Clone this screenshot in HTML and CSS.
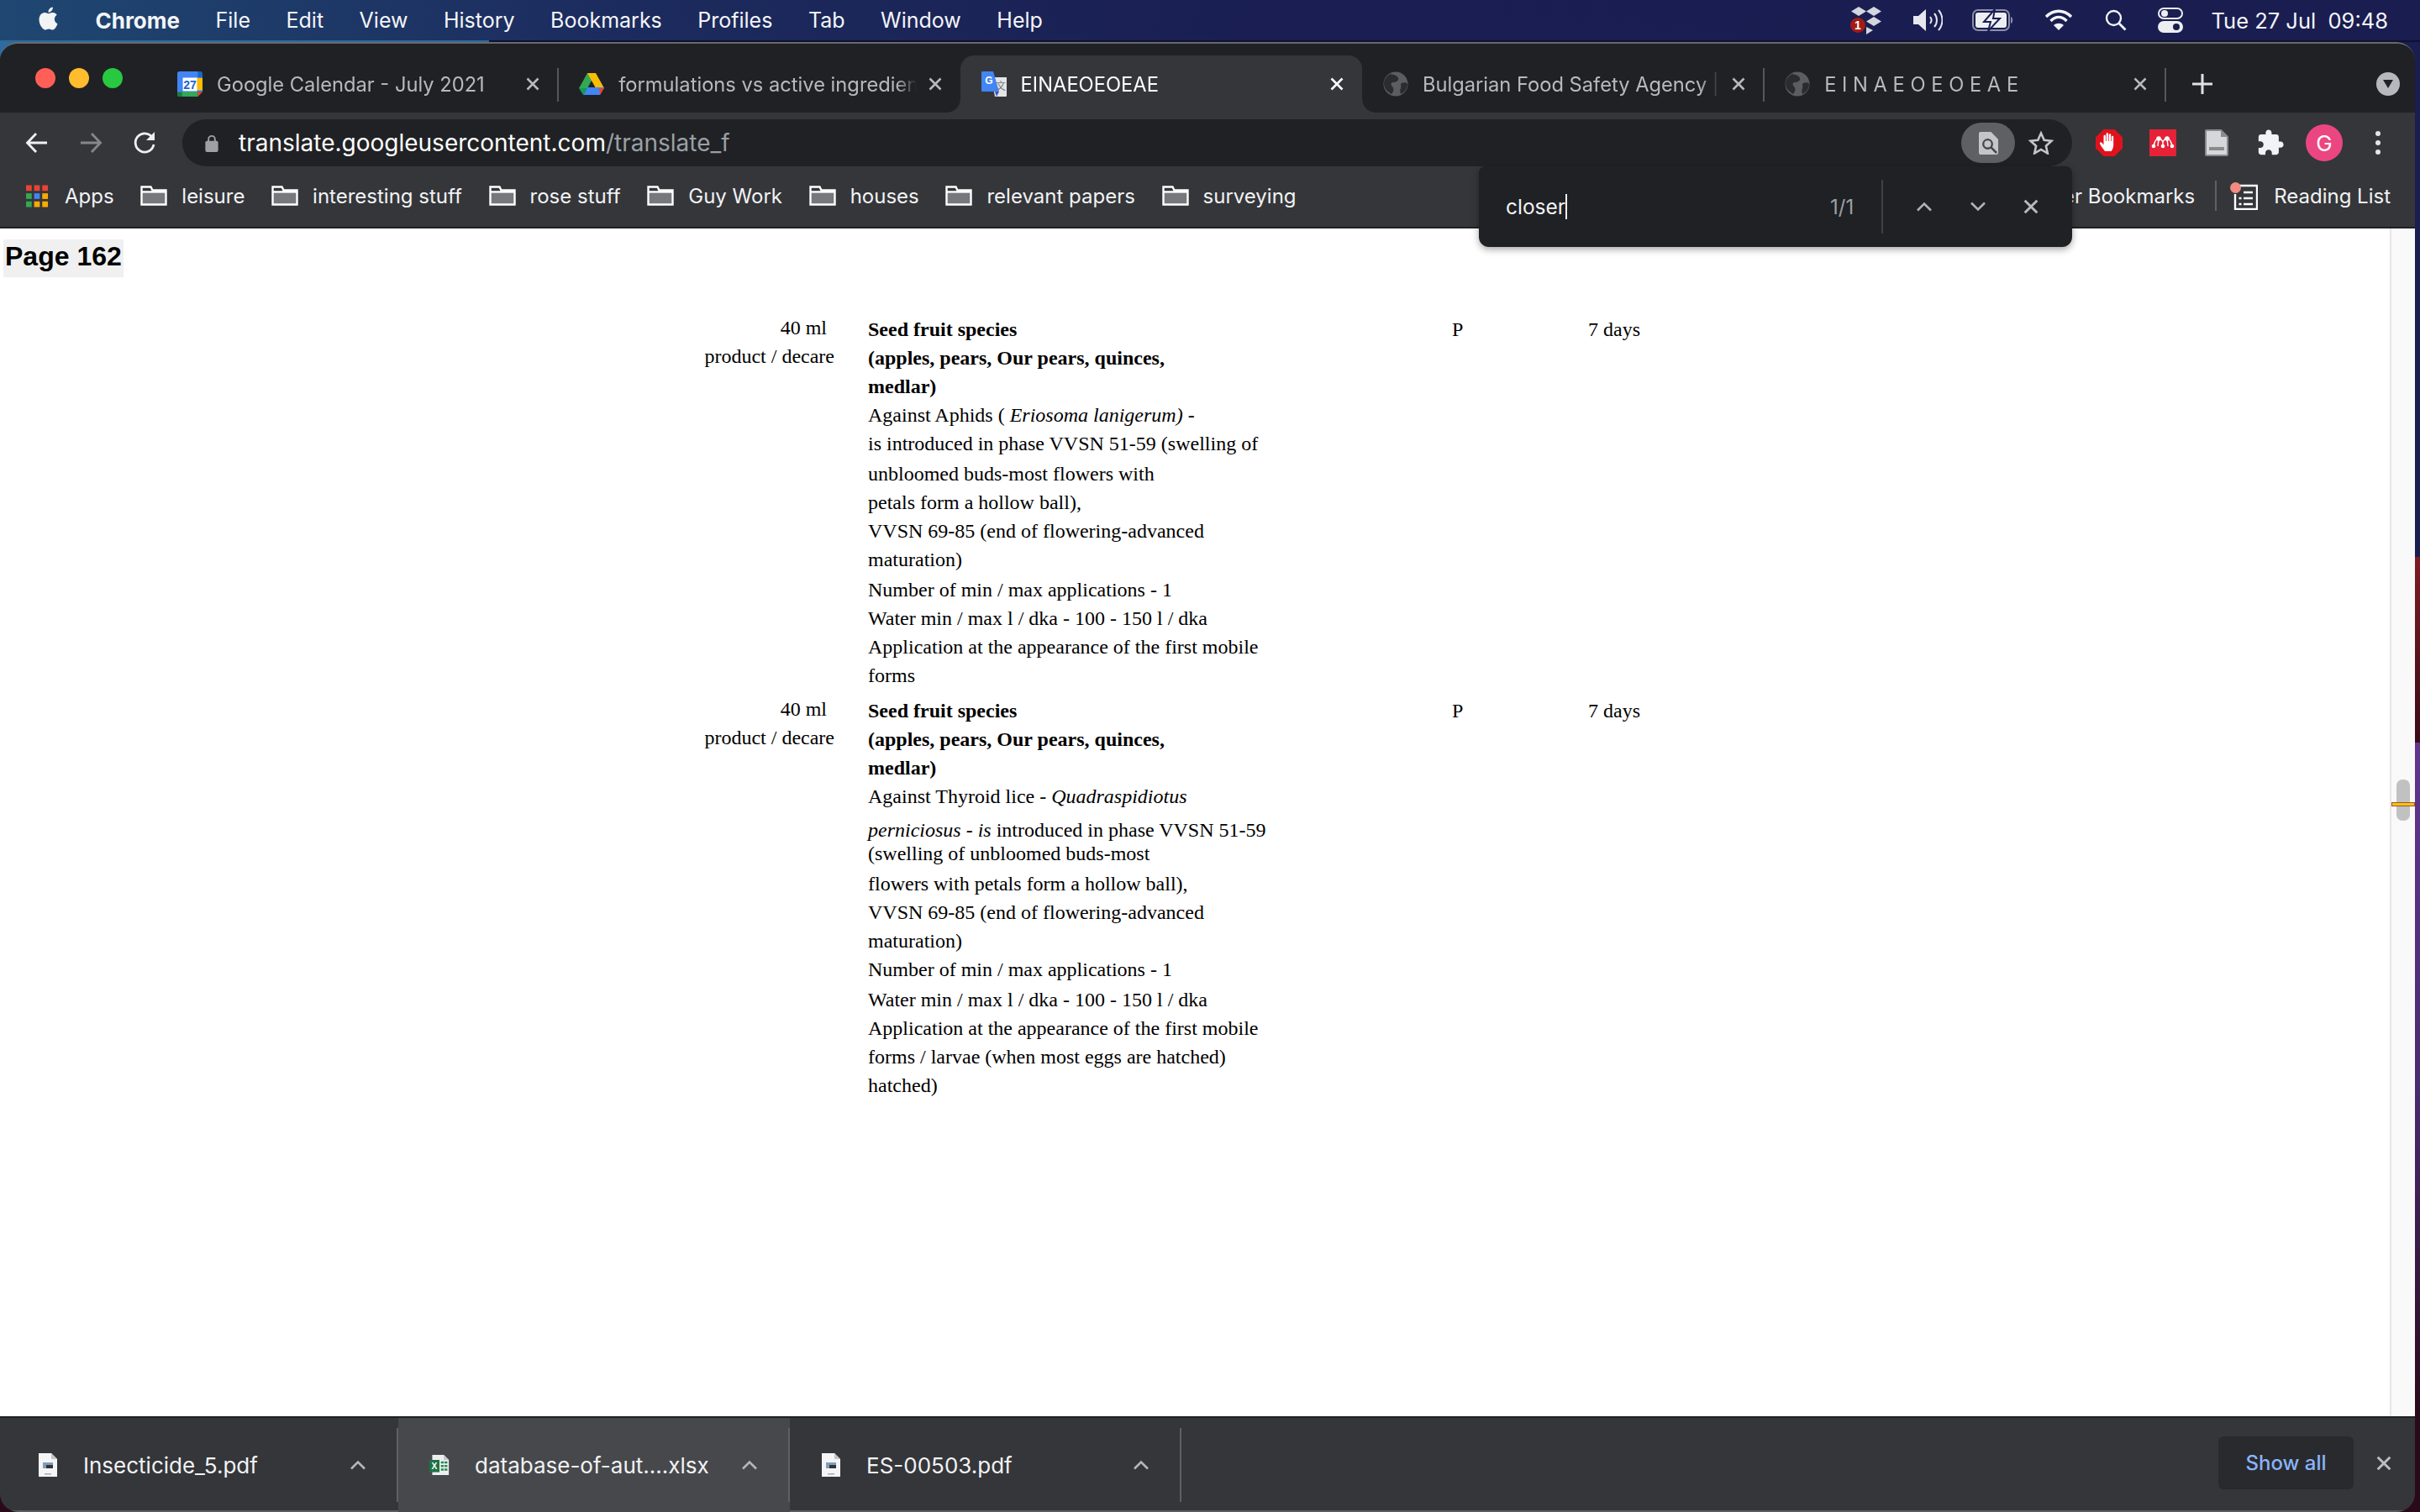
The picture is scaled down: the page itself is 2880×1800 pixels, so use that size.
FILE: index.html
```html
<!DOCTYPE html>
<html lang="en">
<head>
<meta charset="utf-8">
<title>Chrome</title>
<link rel="stylesheet" href="styles.css">
</head>
<body>
<svg class="defs" width="0" height="0" aria-hidden="true">
  <symbol id="folder" viewBox="0 0 32 24">
    <path d="M2 9h28v13H2z" fill="#77787b"/>
    <path d="M1.5 22.5V1.5h11l2 4h16v17zM1.5 7.5h29" fill="none" stroke="#fff" stroke-width="2.4"/>
  </symbol>
  <symbol id="x" viewBox="0 0 16 16">
    <path d="M1.5 1.5l13 13M14.500 1.500l-13 13" fill="none" stroke="currentColor" stroke-width="2.6"/>
  </symbol>
  <symbol id="up" viewBox="0 0 20 12">
    <path d="M2 10.500l8-8 8 8" fill="none" stroke="currentColor" stroke-width="2.6"/>
  </symbol>
  <symbol id="globe" viewBox="0 0 30 30">
    <circle cx="15" cy="15" r="14.500" fill="#5b5d61"/>
    <path d="M9 3c4 1 8 2 9 5s-3 5-6 5-3 3-1 5 2 6-1 9C5 24 1 20 1 15S4 5 9 3zM22 14c3-1 6-1 7 1 0 5-3 10-8 12-1-3-1-5 0-7s-1-5 1-6z" fill="#2b2c30"/>
  </symbol>
  <symbol id="pdf" viewBox="0 0 24 30">
    <path d="M1 1h15l7 7v21H1z" fill="#f4f5f6"/>
    <path d="M16 1v7h7z" fill="#c3c5c8"/>
    <rect x="6" y="12" width="12" height="7" fill="#7f9dbb"/>
    <rect x="10" y="15" width="8" height="4" fill="#333"/>
    <rect x="8" y="25" width="8" height="1.500" fill="#aaa"/>
  </symbol>
</svg>

<header class="menubar">
  <nav class="menu">
    <svg class="apple" viewBox="0 0 24 24"><path fill="#f2f3f5" d="M12.152 6.896c-.948 0-2.415-1.078-3.96-1.04-2.04.027-3.91 1.183-4.961 3.014-2.117 3.675-.546 9.103 1.519 12.09 1.013 1.454 2.208 3.09 3.792 3.039 1.52-.065 2.09-.987 3.935-.987 1.831 0 2.35.987 3.96.948 1.637-.026 2.676-1.48 3.676-2.948 1.156-1.688 1.636-3.325 1.662-3.415-.039-.013-3.182-1.221-3.22-4.857-.026-3.04 2.48-4.494 2.597-4.559-1.429-2.09-3.623-2.324-4.39-2.376-2-.156-3.675 1.09-4.61 1.09zM15.53 3.83c.843-1.012 1.4-2.427 1.245-3.83-1.207.052-2.662.805-3.532 1.818-.78.896-1.454 2.338-1.273 3.714 1.338.104 2.715-.688 3.559-1.701"/></svg>
    <b class="menu-app">Chrome</b>
    <span>File</span><span>Edit</span><span>View</span><span>History</span><span>Bookmarks</span><span>Profiles</span><span>Tab</span><span>Window</span><span>Help</span>
  </nav>
  <div class="status">
    <svg class="st-dropbox" viewBox="0 0 38 34">
      <path d="M10 1l9 5.500-9 5.500-9-5.500zM28 1l9 5.500-9 5.500-9-5.500zM28 13l9 5.500-9 5.500-9-5.500zM19 25l8 4-8 5z" fill="#d3d5df"/>
      <circle cx="9" cy="23" r="9" fill="#a41b14"/>
      <text x="9" y="28" class="st-badge">1</text>
    </svg>
    <svg class="st-volume" viewBox="0 0 36 28">
      <path d="M1 9h6l9-8v26l-9-8H1z" fill="#e6e7ee"/>
      <path d="M21 10c2 2.500 2 5.500 0 8M26 6c4 4.500 4 11.500 0 16M31 2c6 7 6 17 0 24" fill="none" stroke="#e6e7ee" stroke-width="2"/>
    </svg>
    <svg class="st-battery" viewBox="0 0 50 26">
      <rect x="1" y="1" width="43" height="24" rx="6" fill="none" stroke="#8c8fa8" stroke-width="2"/>
      <rect x="4" y="4" width="37" height="18" rx="3" fill="#eceef2"/>
      <path d="M46 9c3 1 3 7 0 8z" fill="#8c8fa8"/>
      <path d="M27 0L14 15h8l-3 11 14-15h-8z" fill="#eceef2" stroke="#1a1d50" stroke-width="2"/>
    </svg>
    <svg class="st-wifi" viewBox="0 0 34 26">
      <path d="M2 9c9-9 21-9 30 0M7.500 14c6-6 13-6 19 0" fill="none" stroke="#f2f3f7" stroke-width="3.400"/>
      <path d="M17 25l-6-6c3.500-3 8.500-3 12 0z" fill="#f2f3f7"/>
    </svg>
    <svg class="st-search" viewBox="0 0 26 26">
      <circle cx="10.500" cy="10.500" r="8.500" fill="none" stroke="#f2f3f7" stroke-width="2.400"/>
      <path d="M16.500 16.500l8 8" stroke="#f2f3f7" stroke-width="2.800"/>
    </svg>
    <svg class="st-control" viewBox="0 0 30 30">
      <rect x="1" y="1" width="28" height="12" rx="6" fill="none" stroke="#eceef2" stroke-width="2"/>
      <circle cx="8" cy="7" r="4" fill="#eceef2"/>
      <rect x="0" y="16" width="30" height="14" rx="7" fill="#eceef2"/>
      <circle cx="22" cy="23" r="4" fill="#1a1d50"/>
    </svg>
    <span class="clock">Tue 27 Jul  09:48</span>
  </div>
</header>

<main class="window">
  <div class="tabstrip">
    <div class="lights"><i class="light red"></i><i class="light amber"></i><i class="light green"></i></div>
    <div class="tab sep">
      <svg class="fav" viewBox="0 0 32 32">
        <path d="M3 0h23l6 6v20H26v6H3a3 3 0 0 1-3-3V3a3 3 0 0 1 3-3z" fill="#4285f4"/>
        <rect x="24" y="8" width="8" height="16" fill="#fbbc04"/>
        <rect x="6" y="26" width="20" height="6" fill="#34a853"/>
        <path d="M0 26h6v6H3a3 3 0 0 1-3-3z" fill="#188038"/>
        <path d="M26 0h3a3 3 0 0 1 3 3v5h-6z" fill="#1967d2"/>
        <path d="M26 26h6l-6 6z" fill="#ea4335"/>
        <rect x="7" y="8" width="18" height="17" fill="#fff"/>
        <text x="16" y="22" class="fav-cal">27</text>
      </svg>
      <span class="title">Google Calendar - July 2021</span>
      <svg class="close"><use href="#x"/></svg>
    </div>
    <div class="tab">
      <svg class="fav" viewBox="0 0 30 28">
        <path d="M10 0h10L10 18H0z" fill="#34a853" transform="translate(0 1)"/>
        <path d="M10 0h10l10 18H20z" fill="#fbbc04" transform="translate(0 1)"/>
        <path d="M5 27l5-9h20l-5 9z" fill="#4285f4"/>
        <path d="M0 19h10l-5 8z" fill="#0f9d58"/>
        <path d="M25 27l5-8h-6z" fill="#ea4335"/>
      </svg>
      <span class="title">formulations vs active ingredients</span>
      <svg class="close"><use href="#x"/></svg>
    </div>
    <div class="tab active">
      <svg class="fav" viewBox="0 0 30 30">
        <path d="M12 7h18v22a1 1 0 0 1-1 1H16z" fill="#e4e5e7"/>
        <path d="M1 0h13l7 24H1a1 1 0 0 1-1-1V1a1 1 0 0 1 1-1z" fill="#4285f4"/>
        <path d="M16 24h5l-3 6z" fill="#3a52c0"/>
        <text x="9" y="15" class="fav-g">G</text>
        <text x="23" y="22" class="fav-t">文</text>
      </svg>
      <span class="title">EINAEOEOEAE</span>
      <svg class="close"><use href="#x"/></svg>
    </div>
    <div class="tab sep">
      <svg class="fav"><use href="#globe"/></svg>
      <span class="title">Bulgarian Food Safety Agency |</span>
      <svg class="close"><use href="#x"/></svg>
    </div>
    <div class="tab sep">
      <svg class="fav"><use href="#globe"/></svg>
      <span class="title">E I N A E O E O E A E</span>
      <svg class="close"><use href="#x"/></svg>
    </div>
    <svg class="plus" viewBox="0 0 24 24"><path d="M12 0v24M0 12h24" stroke="#dfe1e4" stroke-width="3"/></svg>
    <div class="tab-search"><svg viewBox="0 0 14 12"><path d="M1 1h12L7 11z" fill="#202124"/></svg></div>
  </div>

  <div class="toolbar">
    <div class="navrow">
      <button class="btn"><svg class="ic" viewBox="0 0 28 28"><path d="M26 14H3M13 3L2.500 14 13 25" fill="none" stroke="#eef0f2" stroke-width="2.800"/></svg></button>
      <button class="btn"><svg class="ic" viewBox="0 0 28 28"><path d="M2 14h23M15 3l10.500 11L15 25" fill="none" stroke="#85878b" stroke-width="2.800"/></svg></button>
      <button class="btn"><svg class="ic" viewBox="0 0 28 28"><path d="M24 9A11 11 0 1 0 25 16" fill="none" stroke="#eef0f2" stroke-width="2.800"/><path d="M26 1v10H16z" fill="#eef0f2"/></svg></button>
      <div class="omnibox">
        <svg class="lock" viewBox="0 0 16 22"><path d="M4 9V6a4 4 0 0 1 8 0v3" fill="none" stroke="#9da0a5" stroke-width="2"/><rect y="8" width="16" height="14" rx="2" fill="#9da0a5"/></svg>
        <span class="url">translate.googleusercontent.com<span class="url-path">/translate_f</span></span>
        <div class="pill"><svg class="pill-ic" viewBox="0 0 24 28"><path d="M2 0h13l9 9v17a2 2 0 0 1-2 2H2a2 2 0 0 1-2-2V2a2 2 0 0 1 2-2z" fill="#c4c5c7"/><circle cx="11" cy="15" r="5.500" fill="none" stroke="#45464a" stroke-width="2.400"/><path d="M15 19l7 7" stroke="#45464a" stroke-width="2.600"/></svg></div>
        <svg class="star" viewBox="0 0 30 28"><path d="M15 2.500l3.700 8.200 8.800 1-6.600 6 1.900 8.800L15 21.900l-7.800 4.600 1.900-8.800-6.600-6 8.800-1z" fill="none" stroke="#c4c6c9" stroke-width="2.600"/></svg>
      </div>
      <button class="btn"><svg class="ext" viewBox="0 0 32 32"><path d="M9.500 0h13L32 9.500v13L22.500 32h-13L0 22.500v-13z" fill="#e0131c"/><path d="M11 26c-2-3-5-6-6-9-.5-1.500 1.500-2.500 2.500-1l2 2.500V8c0-1.800 2.400-1.800 2.400 0v6h.7V5.500c0-1.800 2.500-1.800 2.500 0V14h.7V6.500c0-1.800 2.400-1.800 2.400 0V14h.7V9c0-1.800 2.300-1.800 2.300 0v10c0 3-1.500 5-2.500 7z" fill="#fff"/></svg></button>
      <button class="btn"><svg class="ext" viewBox="0 0 32 32"><rect width="32" height="32" fill="#e52238"/><path d="M5 20c1-5 3-9 6-9 2 0 4 2 5 4 1-2 3-4 5-4 3 0 5 4 6 9M16 15v5M11 11l-1 9M21 11l1 9" fill="none" stroke="#fff" stroke-width="1.500"/><circle cx="5" cy="20" r="2.300" fill="#fff"/><circle cx="16" cy="20" r="2.300" fill="#fff"/><circle cx="27" cy="20" r="2.300" fill="#fff"/><circle cx="11" cy="11" r="2.800" fill="#fff"/><circle cx="21" cy="11" r="2.800" fill="#fff"/></svg></button>
      <button class="btn"><svg class="ext-doc" viewBox="0 0 28 32"><path d="M2 1h17l8 8v21a1 1 0 0 1-1 1H2a1 1 0 0 1-1-1V2a1 1 0 0 1 1-1z" fill="#d6d7d8" stroke="#8a8b8d" stroke-width="2"/><path d="M19 1v8h8z" fill="#8a8b8d"/><rect x="5" y="21" width="18" height="4" fill="#8a8b8d"/></svg></button>
      <button class="btn"><svg class="ext-puzzle" viewBox="0 0 24 24"><path fill="#f1f3f4" d="M20.500 11H19V7c0-1.100-.9-2-2-2h-4V3.500C13 2.120 11.880 1 10.500 1S8 2.120 8 3.500V5H4c-1.100 0-1.990.9-1.990 2v3.800H3.500c1.490 0 2.700 1.210 2.700 2.700s-1.210 2.700-2.700 2.700H2V20c0 1.100.9 2 2 2h3.800v-1.500c0-1.490 1.210-2.700 2.700-2.700 1.490 0 2.700 1.210 2.700 2.700V22H17c1.100 0 2-.9 2-2v-4h1.500c1.380 0 2.500-1.120 2.500-2.500S21.880 11 20.500 11z"/></svg></button>
      <button class="btn"><span class="avatar">G</span></button>
      <button class="btn"><span class="kebab"><i></i><i></i><i></i></span></button>
    </div>

    <div class="bookmarks">
      <div class="bm">
        <svg class="apps" viewBox="0 0 27 27">
          <rect width="7" height="7" fill="#ea4335"/><rect x="10" width="7" height="7" fill="#ea4335"/><rect x="20" width="7" height="7" fill="#ea4335"/>
          <rect y="10" width="7" height="7" fill="#34a853"/><rect x="10" y="10" width="7" height="7" fill="#4285f4"/><rect x="20" y="10" width="7" height="7" fill="#f9ab00"/>
          <rect y="20" width="7" height="7" fill="#34a853"/><rect x="10" y="20" width="7" height="7" fill="#f9ab00"/><rect x="20" y="20" width="7" height="7" fill="#f9ab00"/>
        </svg>
        <span>Apps</span>
      </div>
      <div class="bm"><svg class="folder"><use href="#folder"/></svg><span>leisure</span></div>
      <div class="bm"><svg class="folder"><use href="#folder"/></svg><span>interesting stuff</span></div>
      <div class="bm"><svg class="folder"><use href="#folder"/></svg><span>rose stuff</span></div>
      <div class="bm"><svg class="folder"><use href="#folder"/></svg><span>Guy Work</span></div>
      <div class="bm"><svg class="folder"><use href="#folder"/></svg><span>houses</span></div>
      <div class="bm"><svg class="folder"><use href="#folder"/></svg><span>relevant papers</span></div>
      <div class="bm"><svg class="folder"><use href="#folder"/></svg><span>surveying</span></div>
      <div class="bm-right">
        <span>Other Bookmarks</span>
        <i class="bm-sep"></i>
        <span class="reading">
          <svg class="reading-ic" viewBox="0 0 33 33">
            <path d="M9 4h23v28H6V14" fill="none" stroke="#fff" stroke-width="2.400"/>
            <path d="M16 12h11M16 19h11M16 26h11M10.500 19h3M10.500 26h3" stroke="#fff" stroke-width="2.400"/>
            <circle cx="6.500" cy="6.500" r="6.500" fill="#f28b82"/>
          </svg>
          Reading List
        </span>
      </div>
    </div>
    <div class="findbar">
      <span class="find-input">closer<i class="caret"></i></span>
      <span class="find-count">1/1</span>
      <i class="find-sep"></i>
      <svg class="find-btn"><use href="#up"/></svg>
      <svg class="find-btn flip"><use href="#up"/></svg>
      <svg class="find-x"><use href="#x"/></svg>
    </div>
  </div>

  <div class="content">
    <section class="page">
      <div class="page-label">Page 162</div>
      <div class="row">
        <div class="c-dose"><div class="ln offset">40 ml</div><div class="ln">product / decare</div></div>
        <div class="c-text">
          <div class="ln"><b>Seed fruit species</b></div>
          <div class="ln"><b>(apples, pears, Our pears, quinces,</b></div>
          <div class="ln"><b>medlar)</b></div>
          <div class="ln">Against Aphids ( <em>Eriosoma lanigerum)</em> -</div>
          <div class="ln tall">is introduced in phase VVSN 51-59 (swelling of</div>
          <div class="ln">unbloomed buds-most flowers with</div>
          <div class="ln">petals form a hollow ball),</div>
          <div class="ln">VVSN 69-85 (end of flowering-advanced</div>
          <div class="ln tall">maturation)</div>
          <div class="ln">Number of min / max applications - 1</div>
          <div class="ln">Water min / max l / dka - 100 - 150 l / dka</div>
          <div class="ln">Application at the appearance of the first mobile</div>
          <div class="ln">forms</div>
        </div>
        <div class="ln">P</div>
        <div class="ln">7 days</div>
      </div>
      <div class="row">
        <div class="c-dose"><div class="ln offset">40 ml</div><div class="ln">product / decare</div></div>
        <div class="c-text">
          <div class="ln"><b>Seed fruit species</b></div>
          <div class="ln"><b>(apples, pears, Our pears, quinces,</b></div>
          <div class="ln"><b>medlar)</b></div>
          <div class="ln taller">Against Thyroid lice - <em>Quadraspidiotus</em></div>
          <div class="ln short"><em>perniciosus - is</em> introduced in phase VVSN 51-59</div>
          <div class="ln tall">(swelling of unbloomed buds-most</div>
          <div class="ln">flowers with petals form a hollow ball),</div>
          <div class="ln">VVSN 69-85 (end of flowering-advanced</div>
          <div class="ln">maturation)</div>
          <div class="ln tall">Number of min / max applications - 1</div>
          <div class="ln">Water min / max l / dka - 100 - 150 l / dka</div>
          <div class="ln">Application at the appearance of the first mobile</div>
          <div class="ln">forms / larvae (when most eggs are hatched)</div>
          <div class="ln">hatched)</div>
        </div>
        <div class="ln">P</div>
        <div class="ln">7 days</div>
      </div>
    </section>
    <aside class="scrollbar"><i class="thumb"></i><i class="tick"></i></aside>
  </div>

  <footer class="downloads">
    <div class="dl">
      <svg class="dl-ic"><use href="#pdf"/></svg>
      <span class="dl-name">Insecticide_5.pdf</span>
      <svg class="dl-caret"><use href="#up"/></svg>
    </div>
    <div class="dl hover">
      <svg class="dl-ic" viewBox="0 0 28 30"><path d="M4 1h16l7 7v21H4z" fill="#eceef0"/><path d="M20 1v7h7z" fill="#c3c5c8"/><rect x="0" y="8" width="14" height="17" fill="#1f7244"/><text x="7" y="21" class="xl">X</text><path d="M16 10h4v3h-4zM21 10h4v3h-4zM16 15h4v3h-4zM21 15h4v3h-4zM16 20h4v3h-4zM21 20h4v3h-4z" fill="#2a8a50"/></svg>
      <span class="dl-name">database-of-aut....xlsx</span>
      <svg class="dl-caret"><use href="#up"/></svg>
    </div>
    <div class="dl">
      <svg class="dl-ic"><use href="#pdf"/></svg>
      <span class="dl-name">ES-00503.pdf</span>
      <svg class="dl-caret"><use href="#up"/></svg>
    </div>
    <button class="show-all">Show all</button>
    <svg class="dl-close"><use href="#x"/></svg>
  </footer>
</main>
</body>
</html>
```

FILE: styles.css
```css
* { box-sizing: border-box; }
html, body { margin: 0; height: 1800px; overflow: hidden; }
body {
  width: 2880px;
  display: flex;
  flex-direction: column;
  font-family: Inter, "Liberation Sans", sans-serif;
  background:
    linear-gradient(#2f6aa0, #2f6aa0) 0 50px / 24px 24px no-repeat,
    linear-gradient(180deg, #1a1d50 0 663px, #7d1c22 663px, #3a0a16 884px, #60358f 884px, #4a2a70 1300px, #2a0a1a 1680px);
}
.defs { position: absolute; }
i { display: block; }
button { border: 0; background: none; padding: 0; font: inherit; color: inherit; }

/* macOS menu bar */
.menubar {
  height: 50px;
  flex: none;
  display: flex;
  align-items: center;
  justify-content: space-between;
  padding: 0 38px 2px 44px;
  color: #f4f5f8;
  font-size: 25px;
  background:
    linear-gradient(90deg, #2c6a9b 0 582px, #0f1030 582px) 0 100% / 100% 2px no-repeat,
    linear-gradient(90deg, #1f4772 0, #1c2c5e 700px, #1a1e52 1500px, #1a1d50 100%);
}
.menu { display: flex; align-items: center; gap: 42.500px; }
.apple { width: 27px; height: 32px; margin-top: -4px; }
.menu-app { font-weight: 700; font-size: 26px; }
.status { display: flex; align-items: center; }
.status svg { flex: none; }
.st-dropbox { width: 38px; height: 34px; margin-right: 36px; }
.st-badge { font: 700 14px "Liberation Sans", sans-serif; fill: #fff; text-anchor: middle; }
.st-volume { width: 36px; height: 28px; margin-right: 35px; }
.st-battery { width: 50px; height: 26px; margin-right: 36px; }
.st-wifi { width: 34px; height: 26px; margin-right: 38px; }
.st-search { width: 26px; height: 26px; margin-right: 37px; }
.st-control { width: 30px; height: 30px; margin-right: 34px; }
.clock { white-space: pre; font-size: 25.500px; }

/* browser window */
.window {
  flex: 1;
  width: 2874px;
  min-height: 0;
  display: flex;
  flex-direction: column;
  overflow: hidden;
  border-radius: 22px;
  background: #202124;
  border-top: 2px solid #68696c;
}
.tabstrip {
  height: 82px;
  flex: none;
  display: flex;
  align-items: flex-end;
  background: #202124;
  position: relative;
}
.lights { width: 186px; flex: none; height: 68px; display: flex; gap: 16px; padding: 0 0 0 42px; margin-bottom: 14px; align-self: flex-start; margin-top: 29px; }
.light { width: 24px; height: 24px; border-radius: 50%; }
.red { background: #ff5f57; }
.amber { background: #febc2e; }
.green { background: #28c840; }
.tab {
  width: 478.300px;
  height: 68px;
  flex: none;
  display: flex;
  align-items: center;
  padding: 0 15px 0 25px;
  color: #b7b9bc;
  font-size: 23.700px;
  position: relative;
}
.tab.sep::after {
  content: "";
  position: absolute;
  right: -1px;
  top: 15px;
  width: 2px;
  height: 40px;
  background: #55565a;
}
.tab.active {
  background: #35363a;
  color: #fff;
  border-radius: 16px 16px 0 0;
}
.tab.active::before, .tab.active::after {
  content: "";
  position: absolute;
  bottom: 0;
  width: 16px;
  height: 16px;
}
.tab.active::before { left: -16px; background: radial-gradient(circle at 0 0, #202124 15.500px, #35363a 16px); }
.tab.active::after { right: -16px; background: radial-gradient(circle at 100% 0, #202124 15.500px, #35363a 16px); }
.fav { width: 30px; height: 30px; flex: none; margin-right: 17px; }
.fav-cal { font: 700 15px "Liberation Sans", sans-serif; fill: #1a66d2; text-anchor: middle; }
.fav-g { font: 700 12px "Liberation Sans", sans-serif; fill: #fff; text-anchor: middle; }
.fav-t { font: 12px "Noto Sans CJK SC", sans-serif; fill: #777; text-anchor: middle; }
.xl { font: 700 12px "Liberation Sans", sans-serif; fill: #fff; text-anchor: middle; }
.title {
  flex: 1;
  min-width: 0;
  white-space: nowrap;
  overflow: hidden;
  margin-right: 7px;
  -webkit-mask-image: linear-gradient(90deg, #000 calc(100% - 24px), transparent);
  mask-image: linear-gradient(90deg, #000 calc(100% - 24px), transparent);
}
.close { width: 16px; height: 16px; flex: none; margin: 0 7px; color: inherit; }
.plus { width: 24px; height: 24px; flex: none; margin: 0 0 22px 32px; }
.tab-search {
  width: 28px; height: 28px; border-radius: 50%; background: #b5b8bd;
  margin: 0 0 20px 195px; flex: none; display: flex; align-items: center; justify-content: center;
}
.tab-search svg { width: 14px; height: 12px; }

.toolbar { flex: none; background: #35363a; position: relative; border-bottom: 2px solid #1f2023; }
.navrow { height: 64px; display: flex; padding: 0 12px; align-items: flex-start; }
.btn { width: 64px; height: 56px; flex: none; display: flex; align-items: center; justify-content: center; margin-top: 8px; }
.ic { width: 28px; height: 28px; }
.omnibox {
  width: 2249px;
  height: 56px;
  flex: none;
  margin: 8px 12px 0 13px;
  border-radius: 28px;
  background: #202124;
  display: flex;
  align-items: center;
  padding: 0 22px 0 27px;
}
.lock { width: 16px; height: 21px; flex: none; margin-right: 24px; }
.url { flex: 1; color: #fff; font-size: 28px; white-space: nowrap; }
.url-path { color: #9aa0a6; }
.pill { width: 64px; height: 48px; border-radius: 24px; background: #5f6063; display: flex; align-items: center; justify-content: center; flex: none; margin-right: 16px; }
.pill-ic { width: 23px; height: 27px; }
.star { width: 30px; height: 28px; flex: none; }
.ext { width: 32px; height: 32px; }
.ext-doc { width: 28px; height: 32px; }
.ext-puzzle { width: 34px; height: 34px; }
.avatar { width: 44px; height: 44px; border-radius: 50%; background: #ec4680; color: #fff; font-size: 26px; display: flex; align-items: center; justify-content: center; }
.kebab { display: flex; flex-direction: column; gap: 5px; }
.kebab i { width: 6px; height: 6px; border-radius: 50%; background: #e3e5e8; }

.bookmarks { height: 72px; display: flex; align-items: center; padding: 0 29px 2px 31px; color: #f1f3f4; font-size: 24px; }
.bm { display: flex; align-items: center; margin-right: 31.700px; white-space: nowrap; }
.apps { width: 26px; height: 27px; margin-right: 20px; flex: none; }
.folder { width: 32px; height: 24px; margin-right: 17px; flex: none; }
.bm-right { margin-left: auto; display: flex; align-items: center; white-space: nowrap; }
.bm-sep { width: 2px; height: 36px; background: #5f6063; margin: 0 16px 0 24px; }
.reading { display: flex; align-items: center; }
.reading-ic { width: 33px; height: 33px; margin-right: 19px; }

.findbar {
  position: absolute;
  left: 1760px;
  top: 64px;
  width: 706px;
  height: 96px;
  background: #202124;
  border-radius: 8px 8px 12px 12px;
  box-shadow: 0 3px 8px rgba(0,0,0,.35);
  display: flex;
  align-items: center;
  padding: 0 0 0 32px;
  color: #f1f3f4;
  font-size: 24.500px;
}
.find-input { width: 386px; display: flex; align-items: center; }
.caret { width: 2px; height: 30px; background: #f1f3f4; }
.find-count { width: 61px; color: #9aa0a6; font-size: 24px; }
.find-sep { width: 2px; height: 64px; background: #3f4043; margin-right: 39px; }
.find-btn { width: 20px; height: 12px; color: #b0b2b5; margin-right: 44px; }
.find-btn.flip { transform: rotate(180deg); }
.find-x { width: 18px; height: 18px; color: #b8babd; }

/* page */
.content { flex: 1; min-height: 0; display: flex; background: #fff; }
.page {
  flex: 1;
  min-width: 0;
  padding-top: 13px;
  color: #000;
  font: 24px "Liberation Serif", serif;
}
.page-label {
  width: max-content;
  margin: 0 0 45px 4px;
  height: 45px;
  padding: 0 2px;
  font: 700 32px/40px "Liberation Sans", sans-serif;
  background: #f0f0f0;
}
.row {
  display: grid;
  grid-template-columns: 155px 695px 202px 1fr;
  padding-left: 838px;
  margin-bottom: 8px;
}
.c-dose { text-align: right; margin-top: -2px; }
.c-text { padding-left: 40px; }
.row > .ln:nth-child(3) { padding-left: 40px; }
.ln { height: 34px; line-height: 34px; white-space: nowrap; }
.ln.tall { height: 36px; }
.ln.taller { height: 40px; }
.ln.short { height: 28px; }
.ln.offset { padding-right: 9px; }

.scrollbar { width: 30px; flex: none; background: #f9f9f9; border-left: 2px solid #e6e6e6; position: relative; }
.thumb { position: absolute; left: 6px; top: 656px; width: 16px; height: 49px; border-radius: 7px; background: #c1c1c1; }
.tick { position: absolute; left: 0; top: 683px; width: 28px; height: 5px; background: #f2c21d; border: 1px solid #a3561c; }

/* download shelf */
.downloads {
  height: 114px;
  flex: none;
  display: flex;
  align-items: stretch;
  background: #35363a;
  border-top: 2px solid #1f2023;
  border-bottom: 2px solid #5b5c60;
  color: #f1f3f4;
  font-size: 26px;
  position: relative;
}
.dl {
  width: 466px;
  flex: none;
  display: flex;
  align-items: center;
  padding-left: 37px;
  position: relative;
  margin-bottom: -2px;
}
.dl:first-child { width: 474px; padding-left: 45px; }
.dl::after {
  content: "";
  position: absolute;
  right: 0;
  top: 12px;
  width: 2px;
  height: 88px;
  background: #5f6063;
}
.dl.hover { background: #47484c; }
.dl-ic { width: 24px; height: 30px; flex: none; margin-right: 30px; }
.dl-name { flex: 1; white-space: nowrap; }
.dl-caret { width: 20px; height: 12px; color: #b4b6b9; margin-right: 38px; flex: none; }
.show-all {
  width: 161px;
  height: 63px;
  margin: 22px 0 0 auto;
  background: #292a2d;
  border-radius: 6px;
  color: #8ab4f8;
  font-size: 24px;
  font-weight: 500;
  flex: none;
}
.dl-close { width: 18px; height: 18px; color: #bdbfc2; flex: none; margin: 45px 28px 0 27px; }
```
